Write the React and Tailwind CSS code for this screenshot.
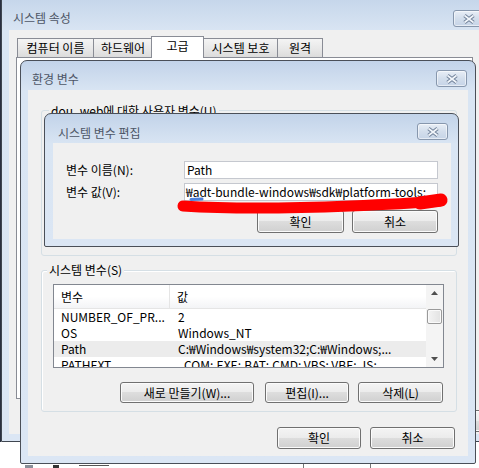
import React from "react";

function CloseBtn() {
  return (
    <div className="flex h-[17px] w-[31px] items-center justify-center rounded-[3px] border border-[#8797ad] bg-[linear-gradient(#e8eef6,#d3deec_50%,#c6d4e7)] shadow-[inset_0_0_0_1px_rgba(255,255,255,0.55)]">
      <svg width="14" height="10" viewBox="0 0 14 10">
        <path d="M2.5 1.5 L11.5 8.5 M11.5 1.5 L2.5 8.5" stroke="#71829a" strokeWidth="3.6" />
        <path d="M2.5 1.5 L11.5 8.5 M11.5 1.5 L2.5 8.5" stroke="#f2f6fb" strokeWidth="1.6" />
      </svg>
    </div>
  );
}

function Btn({ children, w, h = "h-[22px]" }) {
  return (
    <div
      className={`flex ${h} ${w} items-center justify-center rounded-[3px] border border-[#707070] bg-[linear-gradient(#f4f4f4,#ebebeb_50%,#dddddd_50%,#d0d0d0)] text-[12px] leading-[14px] text-black shadow-[inset_0_0_0_1px_#fbfbfb]`}
    >
      {children}
    </div>
  );
}

function Tab({ children, w, active }) {
  if (active) {
    return (
      <div className={`relative z-10 -mb-px -ml-[2px] flex h-[22px] ${w} items-start justify-center border border-b-0 border-[#898c95] bg-white pt-[2px] text-[12px] leading-[14px]`}>
        {children}
      </div>
    );
  }
  return (
    <div className={`-ml-px flex h-[19px] ${w} items-center justify-center border border-b-0 border-[#898c95] bg-[linear-gradient(#f4f4f4,#e9e9e9_50%,#dcdcdc)] text-[12px] leading-[14px]`}>
      {children}
    </div>
  );
}

function UpArrow() {
  return (
    <svg width="7" height="4" viewBox="0 0 7 4">
      <path d="M0 4 L3.5 0 L7 4 Z" fill="#4f4f4f" />
    </svg>
  );
}

function DownArrow() {
  return (
    <svg width="7" height="4" viewBox="0 0 7 4">
      <path d="M0 0 L3.5 4 L7 0 Z" fill="#4f4f4f" />
    </svg>
  );
}

const rows = [
  ["NUMBER_OF_PR...", "2", false],
  ["OS", "Windows_NT", false],
  ["Path", "C:₩Windows₩system32;C:₩Windows;...", true],
  ["PATHEXT", " .COM;.EXE;.BAT;.CMD;.VBS;.VBE;.JS;", false],
];

export default function App() {
  return (
    <div className="relative h-[468px] w-[479px] overflow-hidden bg-white font-['Noto_Sans_CJK_KR',sans-serif] text-[12px] leading-[14px] text-black">
      {/* desktop sliver */}
      <div className="absolute left-0 top-0 h-[442px] w-px bg-[#2a3040]" />

      {/* window behind, only its top edge peeks out */}
      <div className="absolute left-[25px] top-[465px] flex items-start gap-[8px]">
        <div className="h-[3px] w-[8px] bg-[#8a8f99]" />
        <div className="ml-[12px] h-[3px] w-[6px] bg-[#333]" />
        <div className="ml-[12px] h-[3px] w-[30px] border-t border-[#555]" />
      </div>
      <div className="absolute left-[303px] top-[463px] h-[5px] w-[68px] border-l border-r border-t border-[#777]" />

      {/* 시스템 속성 */}
      <div className="absolute left-px top-[-8px] flex h-[450px] w-[490px] flex-col rounded-t-[7px] border border-[#3f4650] bg-[linear-gradient(#c2d3e9,#d9e5f3_38px,#dbe6f4)]">
        <div className="flex h-[37px] shrink-0 items-end justify-between pb-[3px] pl-[11px] pr-[6px]">
          <span className="mb-[2px] text-[#4d5666]">시스템 속성</span>
          <CloseBtn />
        </div>
        <div className="mx-[7px] mb-[7px] flex flex-1 flex-col bg-[#f0f0f0]">
          <div className="ml-[9px] mt-[6px] flex h-[21px] items-end">
            <Tab w="w-[77px]">컴퓨터 이름</Tab>
            <Tab w="w-[60px]">하드웨어</Tab>
            <Tab w="w-[53px]" active>고급</Tab>
            <Tab w="w-[75px]">시스템 보호</Tab>
            <Tab w="w-[46px]">원격</Tab>
          </div>
          <div className="ml-[7px] h-[342px] w-[457px] border border-[#898c95] bg-white" />
          <div className="mr-[-10px] mt-[11px] flex justify-end gap-[8px]">
            <Btn w="w-[84px]">확인</Btn>
            <Btn w="w-[84px]">취소</Btn>
          </div>
        </div>
      </div>

      {/* 환경 변수 */}
      <div className="absolute left-[20px] top-[60px] flex h-[404px] w-[456px] flex-col rounded-t-[7px] rounded-b-[2px] border border-[#4a4f58] bg-[linear-gradient(#c2d3e9,#d9e5f3_30px,#dbe6f4)]">
        <div className="flex h-[29px] shrink-0 items-end justify-between pb-[3px] pl-[11px] pr-[8px]">
          <span className="mb-[1px] text-[#4d5666]">환경 변수</span>
          <CloseBtn />
        </div>
        <div className="mx-[7px] mb-[7px] flex flex-1 flex-col bg-[#f0f0f0]">
          {/* user variables */}
          <div className="relative ml-[13px] mt-[20px] h-[146px] w-[416px] rounded-[3px] border border-[#d5dfe5]">
            <span className="absolute left-[7px] top-[-7px] bg-[#f0f0f0] px-[2px]">dou_web에 대한 사용자 변수(U)</span>
          </div>

          {/* system variables */}
          <div className="relative ml-[13px] mt-[14px] flex w-[416px] flex-col rounded-[3px] border border-[#d5dfe5] pb-[8px] pl-[11px] pr-[13px] pt-[13px] shadow-[inset_1px_1px_0_#fff]">
            <span className="absolute left-[5px] top-[-8px] bg-[#f0f0f0] px-[2px]">시스템 변수(S)</span>
            <div className="flex h-[84px] w-[391px] border border-[#828790] bg-white">
              <div className="flex flex-1 flex-col overflow-hidden">
                <div className="flex h-[24px] shrink-0 border-b border-[#e5e5e5] bg-[linear-gradient(#ffffff,#ffffff_50%,#f3f4f6)]">
                  <div className="flex w-[116px] items-center border-r border-[#e5e5e5] pl-[7px]">변수</div>
                  <div className="flex items-center pl-[7px]">값</div>
                </div>
                {rows.map(([n, v, sel]) => (
                  <div
                    key={n}
                    className={`flex h-[16px] shrink-0 items-center whitespace-pre ${sel ? "bg-[#ececec]" : ""}`}
                  >
                    <div className="w-[116px] pl-[7px]">{n}</div>
                    <div className="pl-[8px]">{v}</div>
                  </div>
                ))}
              </div>
              <div className="flex w-[17px] flex-col items-center bg-[#f4f4f4]">
                <div className="flex h-[16px] items-center">
                  <UpArrow />
                </div>
                <div className="mt-[8px] h-[15px] w-[15px] rounded-[2px] border border-[#9a9a9a] bg-[linear-gradient(90deg,#f4f4f4,#e2e2e2)] shadow-[inset_0_0_0_1px_#fafafa]" />
                <div className="flex-1" />
                <div className="flex h-[16px] items-center">
                  <DownArrow />
                </div>
              </div>
            </div>
            <div className="mt-[14px] flex justify-end">
              <Btn w="w-[134px]" h="h-[21px]">새로 만들기(W)...</Btn>
              <div className="w-[11px]" />
              <Btn w="w-[84px]" h="h-[21px]">편집(I)...</Btn>
              <div className="w-[9px]" />
              <Btn w="w-[85px]" h="h-[21px]">삭제(L)</Btn>
            </div>
          </div>

          <div className="mr-[13px] mt-[15px] flex justify-end gap-[9px]">
            <Btn w="w-[84px]">확인</Btn>
            <Btn w="w-[85px]">취소</Btn>
          </div>
        </div>
      </div>

      {/* 시스템 변수 편집 */}
      <div className="absolute left-[44px] top-[113px] flex h-[134px] w-[415px] flex-col rounded-t-[7px] rounded-b-[2px] border border-[#4a4f58] bg-[linear-gradient(#c2d3e9,#d9e5f3_30px,#dbe6f4)]">
        <div className="flex h-[29px] shrink-0 items-end justify-between pb-[3px] pl-[13px] pr-[10px]">
          <span className="text-[#4d5666]">시스템 변수 편집</span>
          <CloseBtn />
        </div>
        <div className="mb-[7px] ml-[8px] mr-[7px] flex flex-1 flex-col bg-[#f0f0f0] pl-[13px] pr-[13px]">
          <div className="mt-[18px] flex items-center">
            <div className="w-[118px]">변수 이름(N):</div>
            <div className="flex h-[18px] w-[254px] items-center border border-[#c5c8cf] bg-white pl-[2px]">Path</div>
          </div>
          <div className="mt-[4px] flex items-center">
            <div className="w-[118px]">변수 값(V):</div>
            <div className="flex h-[18px] w-[254px] items-center overflow-hidden whitespace-nowrap border border-[#c5c8cf] bg-white pl-[1px]">
              ₩adt-bundle-windows₩sdk₩platform-tools;
            </div>
          </div>
          <div className="mt-[9px] flex justify-end gap-[8px]">
            <Btn w="w-[87px]" h="h-[23px]">확인</Btn>
            <Btn w="w-[86px]" h="h-[23px]">취소</Btn>
          </div>
        </div>
      </div>

      {/* marker scribble */}
      <svg className="pointer-events-none absolute left-0 top-0" width="479" height="468" viewBox="0 0 479 468">
        <path
          d="M183 206 C 230 209, 300 208, 350 206 S 415 203, 440 201"
          stroke="#ff0000"
          strokeWidth="11"
          strokeLinecap="round"
          fill="none"
        />
        <path d="M420 203 L441 200" stroke="#ff0000" strokeWidth="13" strokeLinecap="round" />
        <path d="M191 199.5 L202 199" stroke="#4f82db" strokeWidth="3" strokeLinecap="round" />
      </svg>
    </div>
  );
}
